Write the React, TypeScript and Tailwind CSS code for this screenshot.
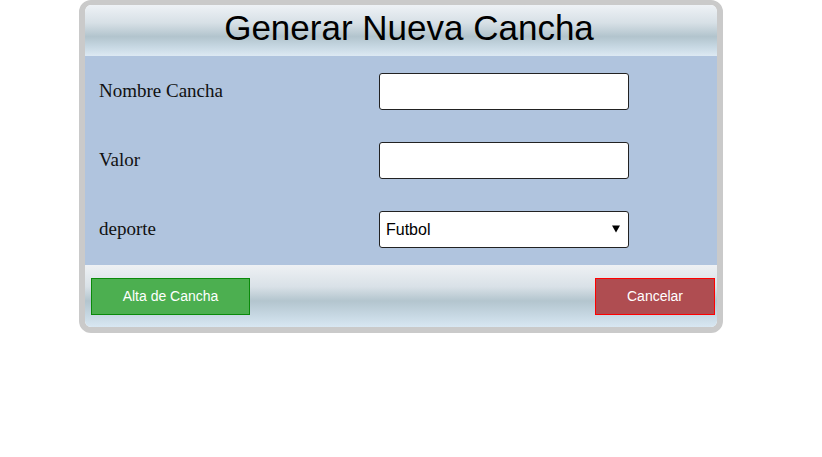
import React from "react";

const HEADER_BG =
  "bg-[linear-gradient(to_bottom,#eef2f6_0%,#d7e0e6_35%,#b2c4cd_62%,#c7d8e3_82%,#dde9f3_100%)]";
const FOOTER_BG =
  "bg-[linear-gradient(to_bottom,#eef1f4_0%,#d9e1e7_35%,#b3c5ce_58%,#c6d7e2_80%,#d8e7f2_100%)]";

const rows = [
  { label: "Nombre Cancha", kind: "text" },
  { label: "Valor", kind: "text" },
  { label: "deporte", kind: "select" },
];

export default function App() {
  return (
    <div className="w-[822px] h-[457px] bg-white">
      <div className="ml-[79px] w-[644px] border-[6px] border-t-[5px] border-[#cacaca] rounded-[12px] overflow-hidden">
        {/* header */}
        <div className={`${HEADER_BG} h-[51px] flex items-center justify-center pl-[16px] pb-[6px]`}>
          <h1 className="text-[35px] leading-none text-black font-['Liberation_Sans',Arial,sans-serif]">
            Generar Nueva Cancha
          </h1>
        </div>

        {/* form body */}
        <div className="bg-[#b0c4de] py-[17px] flex flex-col gap-[32px]">
          {rows.map((r) => (
            <div key={r.label} className="flex items-center h-[37px]">
              <label className="w-[294px] pl-[14px] text-[19px] text-[#111] font-['Liberation_Serif','Times_New_Roman',serif]">
                {r.label}
              </label>
              {r.kind === "text" ? (
                <input
                  type="text"
                  className="w-[250px] h-[37px] bg-white border border-[#222] rounded-[3px] outline-none"
                />
              ) : (
                <div className="relative w-[250px] h-[37px]">
                  <select className="appearance-none w-full h-full bg-white border border-[#222] rounded-[3px] pl-[6px] text-[16px] text-black font-['Liberation_Sans',Arial,sans-serif] outline-none">
                    <option>Futbol</option>
                  </select>
                  <svg
                    className="absolute right-[9px] top-[14px] pointer-events-none"
                    width="8"
                    height="8"
                    viewBox="0 0 8 8"
                  >
                    <path d="M0 0.5 L8 0.5 L4 7.5 Z" fill="#000" />
                  </svg>
                </div>
              )}
            </div>
          ))}
        </div>

        {/* footer */}
        <div className={`${FOOTER_BG} h-[62px] flex items-start justify-between pt-[13px] pl-[6px] pr-[2px]`}>
          <button className="w-[159px] h-[37px] bg-[#4caf50] border border-[#0a8a0a] text-white text-[14px] font-['Liberation_Sans',Arial,sans-serif]">
            Alta de Cancha
          </button>
          <button className="w-[120px] h-[37px] bg-[#af4d51] border border-[#ff0000] text-white text-[14px] font-['Liberation_Sans',Arial,sans-serif]">
            Cancelar
          </button>
        </div>
      </div>
    </div>
  );
}
